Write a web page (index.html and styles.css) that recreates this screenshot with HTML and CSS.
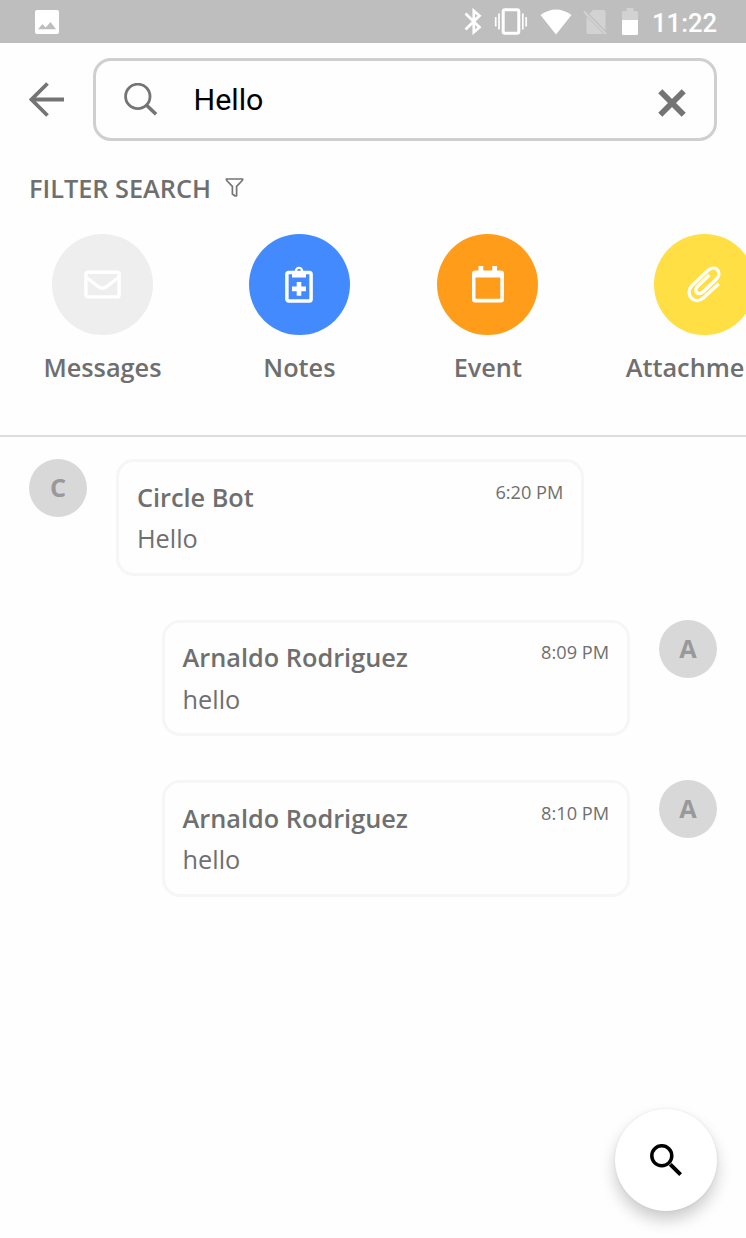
FILE: index.html
```html
<!DOCTYPE html>
<html lang="en">
<head>
<meta charset="utf-8">
<title>Search</title>
<link rel="stylesheet" href="styles.css">
</head>
<body>
<div class="screen">
  <header class="status">
    <svg class="status-photo" width="24" height="24" viewBox="0 0 24 24"><rect width="24" height="24" rx="2" fill="#fff"/><path d="M3 19.300 7.500 14l3.200 3.500 4.800-5.500L21 19.300z" fill="#bebebe"/></svg>
    <div class="status-icons">
      <svg width="18" height="27" viewBox="0 0 18 27" fill="none" stroke="#fff" stroke-width="2.700"><path d="M1.500 5.500 15.500 19.200l-5.700 5V2.800l5.700 5L1.500 21.500"/></svg>
      <svg width="34" height="27" viewBox="0 0 34 27" fill="none" stroke="#fff"><rect x="9.200" y="1.700" width="15.600" height="23.600" rx="1.800" stroke-width="3"/><path d="M5 5.500v16M1.700 9v9.500M28.800 5.500v16M32.200 9v9.500" stroke-width="1.700"/></svg>
      <svg width="32" height="26" viewBox="0 0 32 26"><path d="M.5 6Q16-5 31.500 6L16 25.500z" fill="#fff"/></svg>
      <svg class="dim" width="24" height="26" viewBox="0 0 24 26"><path d="M10 1H20.500a2 2 0 0 1 2 2V21.500L6.300 5zM3.500 7.500 20.800 25H5.500a2 2 0 0 1-2-2z" fill="#d2d2d2"/><path d="M1 2.500 23 25" stroke="#d2d2d2" stroke-width="1.800"/></svg>
      <svg width="16" height="27" viewBox="0 0 16 27"><path d="M4.500 0h7v3H14.500a1.500 1.500 0 0 1 1.500 1.500V13H0V4.500A1.500 1.500 0 0 1 1.500 3h3z" fill="#d2d2d2"/><path d="M0 12h16v13.500a1.500 1.500 0 0 1-1.500 1.500h-13A1.500 1.500 0 0 1 0 25.500z" fill="#fff"/></svg>
    </div>
    <span class="clock">11:22</span>
  </header>

  <div class="topbar">
    <svg width="35" height="35" viewBox="0 0 35 35" fill="none" stroke="#747474"><path d="M35 17.500H2" stroke-width="3.800"/><path d="M18.500 1.500 2.500 17.500l16 16" stroke-width="3.800"/></svg>
    <div class="field">
      <svg width="34" height="34" viewBox="0 0 34 34" fill="none" stroke="#747474"><circle cx="13.800" cy="13.400" r="12.200" stroke-width="2.800"/><path d="m22.300 22 9.800 9.300" stroke-width="3.600"/></svg>
      <span class="query">Hello</span>
      <svg class="clear" width="28" height="28" viewBox="0 0 28 28" stroke="#747474" stroke-width="5.800"><path d="m2.300 2.300 23.400 23.400M25.700 2.300 2.300 25.700"/></svg>
    </div>
  </div>

  <div class="filter-title">
    <span>FILTER SEARCH</span>
    <svg width="19" height="19" viewBox="0 0 19 19" fill="none" stroke="#747474" stroke-width="1.700" stroke-linejoin="round"><path d="M1.300 1H17.700Q17.800 2 16.800 3L11.600 8.400V17.800L10.200 18 7.400 16V8.400L2.200 3Q1.200 2 1.300 1z"/></svg>
  </div>

  <nav class="filters">
    <div class="filter">
      <div class="disc disc-gray"><svg width="37" height="37" viewBox="0 0 37 37" fill="none" stroke="#fff" stroke-width="3.400"><rect x="1.900" y="6.300" width="33.200" height="24.600" rx="2"/><path d="m2.500 11.500 11 8.500Q18.500 24.500 23.500 20l11-8.500"/></svg></div>
      <span>Messages</span>
    </div>
    <div class="filter">
      <div class="disc disc-blue"><svg width="28" height="37" viewBox="0 0 28 37"><rect x="1.900" y="6.500" width="24.200" height="28.600" rx="1.800" fill="none" stroke="#fff" stroke-width="3.500"/><path fill="#fff" fill-rule="evenodd" d="M7 11.500V5h2.700a4.300 4.300 0 0 1 8.600 0H21v6.500zM14 2.800a1.800 1.800 0 1 0 0 3.600 1.800 1.800 0 0 0 0-3.600z"/><path fill="#fff" d="M11.700 16h4.600v4.600H21v4.600h-4.700v4.600h-4.600v-4.600H7v-4.600h4.700z"/></svg></div>
      <span>Notes</span>
    </div>
    <div class="filter">
      <div class="disc disc-orange"><svg width="32" height="37" viewBox="0 0 32 37"><path fill="#fff" fill-rule="evenodd" d="M6.500 0h4.800v4.500h9V0H25v4.500h4A3 3 0 0 1 32 7.500v26a3 3 0 0 1-3 3H3a3 3 0 0 1-3-3v-26a3 3 0 0 1 3-3h3.500zM3.500 11.500v21.300h24.800V11.500z"/></svg></div>
      <span>Event</span>
    </div>
    <div class="filter">
      <div class="disc disc-yellow"><svg width="34" height="37" viewBox="0 0 34 37" fill="none" stroke="#fff" stroke-width="3.400"><path d="M22.300 9 10.800 20C5.800 25 11.200 30.500 16.200 25.800L29.300 13.200C36 6.500 28.300-2 21.200 4.300L4.800 19.800C-3 28 7.300 40 16.500 31.800L31.700 17.800"/></svg></div>
      <span>Attachments</span>
    </div>
  </nav>

  <main class="messages">
    <article class="message">
      <div class="avatar">C</div>
      <div class="bubble"><div><div class="name">Circle Bot</div><div class="body">Hello</div></div><time>6:20 PM</time></div>
    </article>
    <article class="message own">
      <div class="avatar">A</div>
      <div class="bubble"><div><div class="name">Arnaldo Rodriguez</div><div class="body">hello</div></div><time>8:09 PM</time></div>
    </article>
    <article class="message own">
      <div class="avatar">A</div>
      <div class="bubble"><div><div class="name">Arnaldo Rodriguez</div><div class="body">hello</div></div><time>8:10 PM</time></div>
    </article>
  </main>

  <div class="fab"><svg width="32" height="32" viewBox="0 0 32 32" fill="none" stroke="#000"><circle cx="11.800" cy="11.800" r="10" stroke-width="3.500"/><path d="m20.300 20.300 10.300 10.300" stroke-width="4"/></svg></div>
</div>
</body>
</html>
```

FILE: styles.css
```css
* { box-sizing: border-box; }
body { margin: 0; background: #fefefe; }
svg { display: block; flex: none; }

.screen {
  position: relative;
  width: 746px;
  height: 1238px;
  overflow: hidden;
  background: #fefefe;
  color: #6f6f6f;
  font-family: "Open Sans", sans-serif;
  font-size: 25.3px;
}

.status {
  display: flex;
  align-items: center;
  height: 43px;
  padding: 0 29px 0 35px;
  background: #bebebe;
}
.status-icons { display: flex; align-items: center; gap: 12px; margin-left: auto; }
.dim { margin: 0 3px 0 -1px; }
.clock {
  margin: 4px 0 0 14px;
  color: #fff;
  font: 500 25.600px/43px Roboto, sans-serif;
}

.topbar { display: flex; align-items: center; gap: 29px; height: 83px; margin: 15px 29px 0; }
.field {
  display: flex;
  align-items: center;
  flex: 1;
  height: 83px;
  padding: 0 28.5px 0 28px;
  border: 3px solid #cfcfcf;
  border-radius: 18px;
}
.query { margin-left: 35.500px; padding-top: 1px; color: #000; font: 400 30.400px/36px Roboto, sans-serif; }
.clear { margin: 7px 0 0 auto; }

.filter-title {
  display: flex;
  align-items: center;
  gap: 15px;
  height: 34px;
  margin: 29.500px 29px 0;
  font-weight: 600;
}
.filter-title span { width: 181px; white-space: nowrap; }

.filters {
  display: flex;
  gap: 87.4px;
  height: 204px;
  margin-top: 28.500px;
  padding: 1px 0 0 43.400px;
  border-bottom: 2px solid #dcdcdc;
}
.filter {
  display: flex;
  flex: none;
  flex-direction: column;
  align-items: center;
  gap: 15px;
  font-weight: 600;
  line-height: 34px;
}
.disc {
  display: grid;
  place-items: center;
  width: 101px;
  height: 101px;
  border-radius: 50%;
}
.disc-gray { background: #eee; }
.disc-blue { background: #448aff; }
.disc-orange { background: #ff9c1a; }
.disc-yellow { background: #ffdf43; }

.messages { display: flex; flex-direction: column; gap: 44.2px; padding: 22px 29px; }
.message { display: flex; gap: 29.4px; }
.own { flex-direction: row-reverse; }
.avatar {
  width: 58px;
  height: 58px;
  border-radius: 50%;
  background: #d8d8d8;
  color: #999;
  font-weight: 700;
  line-height: 57px;
  text-align: center;
}
.bubble {
  display: flex;
  justify-content: space-between;
  width: 467.500px;
  height: 116.500px;
  padding: 16.500px 17.500px 0;
  border: 3px solid #f6f6f6;
  border-radius: 18px;
}
.name { font-weight: 600; line-height: 36px; }
.body { margin-top: 5.500px; line-height: 36px; }
time { font-size: 18.200px; line-height: 27px; }

.fab {
  position: absolute;
  right: 29px;
  bottom: 27px;
  display: grid;
  place-items: center;
  width: 102px;
  height: 102px;
  border-radius: 50%;
  background: #fff;
  box-shadow: 0 9px 16px rgba(0, 0, 0, .2), 0 0 3px rgba(0, 0, 0, .08);
}
```
